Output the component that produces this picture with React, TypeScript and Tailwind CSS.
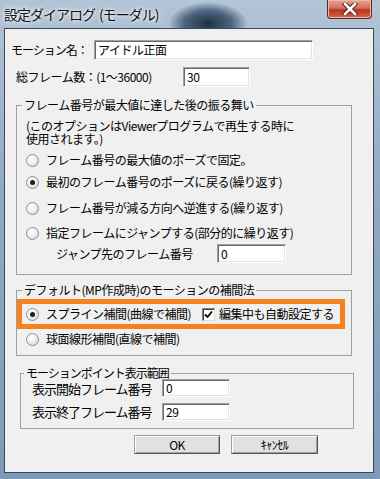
import React from "react";

function Radio({ checked = false }: { checked?: boolean }) {
  return (
    <span className="w-[13px] h-[13px] shrink-0 rounded-full border border-[#8e8f8f] bg-[radial-gradient(circle_at_40%_35%,#ffffff_0%,#f0f0f0_45%,#cdcdcd_100%)] flex items-center justify-center">
      {checked && <span className="w-[5px] h-[5px] rounded-full bg-[#1c1c1c]" />}
    </span>
  );
}

function Field({ w, h = 20, value }: { w: number; h?: number; value: string }) {
  return (
    <div
      className="bg-white border border-t-[#a0a0a0] border-l-[#a0a0a0] border-b-white border-r-white shadow-[inset_1px_1px_0_#696969,inset_-1px_-1px_0_#e3e3e3] flex items-center pl-[3px] text-[12px] leading-none shrink-0"
      style={{ width: w, height: h }}
    >
      {value}
    </div>
  );
}

function Btn({ w, label }: { w: number; label: string }) {
  return (
    <div
      className="h-[19px] flex items-center justify-center bg-[#e1e1e1] border border-t-[#a0a0a0] border-l-[#a0a0a0] border-b-[#555] border-r-[#555] shadow-[inset_1px_1px_0_#ffffff,inset_-1px_-1px_0_#a0a0a0] text-[12px] leading-none"
      style={{ width: w }}
    >
      {label}
    </div>
  );
}

export default function App() {
  return (
    <div className="w-[380px] h-[479px] flex flex-col pl-[4px] pr-[6px] pb-[6px] font-['MS_UI_Gothic','Noto_Sans_CJK_JP',sans-serif] text-[12px] tracking-[-0.5px] text-black bg-[radial-gradient(ellipse_40px_22px_at_208px_24px,#1f2f3f_0%,#4f6680_60%,transparent_100%),linear-gradient(to_bottom,#b3c4d6,#93a9c0_40%,#7f9ab8)]">
      {/* title bar */}
      <div className="h-[28px] flex items-start">
        <span className="mt-[5px] text-[14px] leading-[18px] tracking-[-1px] text-[#111] [text-shadow:0_0_6px_#ffffff,0_0_3px_#ffffff]">
          設定ダイアログ<span className="ml-[4px]">(モーダル)</span>
        </span>
        <div className="ml-auto mr-[2px] w-[45px] h-[19px] rounded-b-[4px] border border-t-0 border-[#5a2a22] bg-[linear-gradient(to_bottom,#e8a493,#d2705b_45%,#b8321c_55%,#d4684f)] flex items-center justify-center shadow-[inset_0_0_0_1px_#f0b8a8]">
          <svg width="16" height="12" viewBox="0 0 16 12">
            <path d="M3 1 L13 11 M13 1 L3 11" stroke="#4a2018" strokeWidth="4.5" strokeLinecap="square" />
            <path d="M3 1 L13 11 M13 1 L3 11" stroke="#ffffff" strokeWidth="2.6" strokeLinecap="square" />
          </svg>
        </div>
      </div>

      {/* client area */}
      <div className="flex-1 border border-[#34485e] bg-[#f0f0f0] flex flex-col">
        <div className="mt-[11px] h-[20px] flex items-center">
          <span className="ml-[6px] w-[83px] tracking-[-1px]">モーション名：</span>
          <Field w={219} value="アイドル正面" />
        </div>
        <div className="mt-[7px] h-[20px] flex items-center">
          <span className="ml-[11px] w-[167px]">総フレーム数：(1～36000)</span>
          <Field w={67} value="30" />
        </div>

        <fieldset className="mt-[10px] ml-[11px] w-[336px] border border-[#a0a0a0] pb-[11px]">
          <legend className="ml-[5px] px-[2px] leading-[16px]">フレーム番号が最大値に達した後の振る舞い</legend>
          <div className="mt-[6px] pl-[9px] leading-[13px]">
            <div className="h-[13px]">(このオプションはViewerプログラムで再生する時に</div>
            <div className="h-[13px]">使用されます。)</div>
          </div>
          <div className="mt-[7px] pl-[9px] h-[16px] flex items-center gap-[7px]">
            <Radio />
            <span>フレーム番号の最大値のポーズで固定。</span>
          </div>
          <div className="mt-[6px] pl-[9px] h-[16px] flex items-center gap-[7px]">
            <Radio checked />
            <span>最初のフレーム番号のポーズに戻る(繰り返す)</span>
          </div>
          <div className="mt-[10px] pl-[9px] h-[16px] flex items-center gap-[7px]">
            <Radio />
            <span>フレーム番号が減る方向へ逆進する(繰り返す)</span>
          </div>
          <div className="mt-[9px] pl-[9px] h-[16px] flex items-center gap-[7px]">
            <Radio />
            <span>指定フレームにジャンプする(部分的に繰り返す)</span>
          </div>
          <div className="mt-[3px] h-[19px] flex items-center">
            <span className="ml-[39px] w-[161px]">ジャンプ先のフレーム番号</span>
            <Field w={69} h={19} value="0" />
          </div>
        </fieldset>

        <fieldset className="mt-[7px] ml-[11px] w-[336px] border border-[#a0a0a0] pb-[8px]">
          <legend className="ml-[5px] px-[2px] leading-[16px]">デフォルト(MP作成時)のモーションの補間法</legend>
          <div className="mt-[1px] w-[328px] h-[30px] border-[5px] border-[#f5821f] flex items-center pl-[4px]">
            <Radio checked />
            <span className="ml-[7px] w-[156px]">スプライン補間(曲線で補間)</span>
            <span className="w-[13px] h-[13px] bg-white border border-t-[#808080] border-l-[#808080] border-b-[#dcdcdc] border-r-[#dcdcdc] shadow-[inset_1px_1px_0_#404040] flex items-center justify-center">
              <svg width="9" height="9" viewBox="0 0 9 9">
                <path d="M1 4.5 L3.5 7 L8 1.5" stroke="#000" strokeWidth="1.8" fill="none" />
              </svg>
            </span>
            <span className="ml-[4px]">編集中も自動設定する</span>
          </div>
          <div className="mt-[2px] pl-[9px] h-[16px] flex items-center gap-[7px]">
            <Radio />
            <span>球面線形補間(直線で補間)</span>
          </div>
        </fieldset>

        <fieldset className="mt-[11px] ml-[15px] w-[334px] border border-[#a0a0a0] pb-[7px]">
          <legend className="ml-[3px] px-[2px] leading-[12px] tracking-[-1px]">モーションポイント表示範囲</legend>
          <div className="h-[18px] flex items-center">
            <span className="ml-[11px] w-[130px] text-[13px] tracking-[-1px] leading-[14px] pt-[2px]">表示開始フレーム番号</span>
            <Field w={68} h={18} value="0" />
          </div>
          <div className="mt-[6px] h-[18px] flex items-center">
            <span className="ml-[11px] w-[130px] text-[13px] tracking-[-1px] leading-[14px]">表示終了フレーム番号</span>
            <Field w={68} h={18} value="29" />
          </div>
        </fieldset>

        <div className="mt-[6px] ml-[129px] flex gap-[11px]">
          <Btn w={86} label="OK" />
          <Btn w={87} label="ｷｬﾝｾﾙ" />
        </div>
      </div>
    </div>
  );
}
